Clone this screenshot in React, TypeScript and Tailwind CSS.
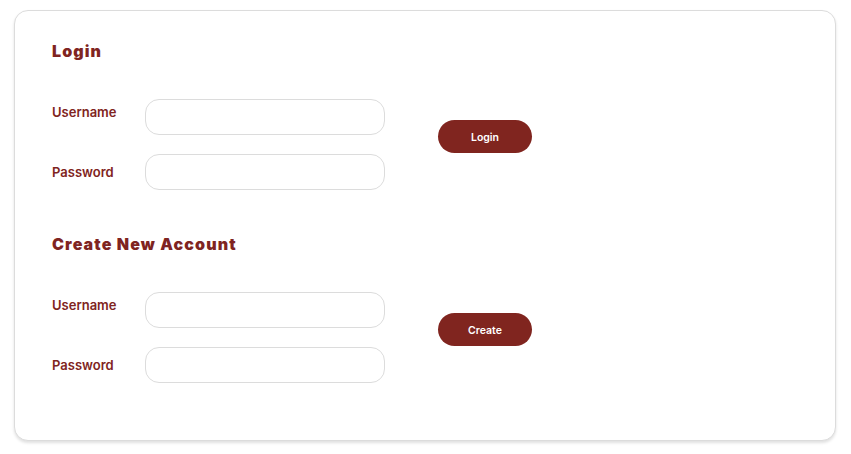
import React from "react";

function Row({ label, shift }: { label: string; shift?: boolean }) {
  return (
    <div className="flex items-center">
      <label className={`w-[93px] text-[13px] font-semibold text-[#7f2421] ${shift ? "-translate-y-[4px]" : "translate-y-[1px]"}`}>{label}</label>
      <input className="h-[36px] w-[240px] rounded-[14px] border border-[#dcdcdc] bg-white px-3 text-[13px] outline-none" />
    </div>
  );
}

function Section({ title, button }: { title: string; button: string }) {
  return (
    <div className="flex flex-col">
      <h2 className="text-[16px] leading-[24px] font-black tracking-[0.07em] text-[#7f2421]">{title}</h2>
      <div className="mt-[36px] flex items-start">
        <div className="flex flex-col gap-[19px]">
          <Row label="Username" shift />
          <Row label="Password" />
        </div>
        <button className="mt-[21px] ml-[53px] h-[33px] w-[94px] rounded-full bg-[#80251f] pt-[2px] text-[10.5px] font-semibold text-white">
          {button}
        </button>
      </div>
    </div>
  );
}

export default function App() {
  return (
    <div className="min-h-[454px] w-[851px] bg-white pt-[10px] pl-[14px]" style={{ fontFamily: "Inter, 'Noto Sans', sans-serif" }}>
      <div className="flex h-[431px] w-[822px] flex-col gap-[42px] rounded-[14px] border border-[#dcdcdc] bg-white pt-[28px] pl-[37px] shadow-[0_2px_3px_rgba(0,0,0,0.12)]">
        <Section title="Login" button="Login" />
        <Section title="Create New Account" button="Create" />
      </div>
    </div>
  );
}
